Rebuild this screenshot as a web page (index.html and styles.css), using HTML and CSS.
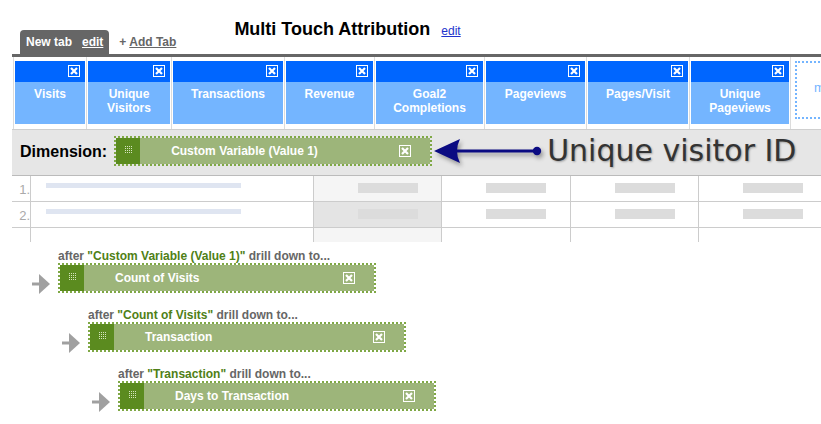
FILE: index.html
```html
<!DOCTYPE html>
<html>
<head>
<meta charset="utf-8">
<link rel="stylesheet" href="styles.css">
</head>
<body>
<div class="header">
  <div class="tab"><span>New tab</span><a href="#">edit</a></div>
  <div class="addtab">+ <a href="#">Add Tab</a></div>
  <div class="title"><h1>Multi Touch Attribution</h1><a href="#">edit</a></div>
</div>
<div class="topbar"></div>

<div class="metrics">
  <div class="mcell w1"><div class="mbox"><div class="mhead"><svg class="x" width="12" height="12" viewBox="0 0 12 12"><rect x="0.5" y="0.5" width="11" height="11" fill="#0066ff" stroke="#fff"/><path d="M3 3L9 9M9 3L3 9" stroke="#fff" stroke-width="2.2"/></svg></div><div class="mlabel">Visits</div></div></div>
  <div class="mcell w2"><div class="mbox"><div class="mhead"><svg class="x" width="12" height="12" viewBox="0 0 12 12"><rect x="0.5" y="0.5" width="11" height="11" fill="#0066ff" stroke="#fff"/><path d="M3 3L9 9M9 3L3 9" stroke="#fff" stroke-width="2.2"/></svg></div><div class="mlabel">Unique<br>Visitors</div></div></div>
  <div class="mcell w3"><div class="mbox"><div class="mhead"><svg class="x" width="12" height="12" viewBox="0 0 12 12"><rect x="0.5" y="0.5" width="11" height="11" fill="#0066ff" stroke="#fff"/><path d="M3 3L9 9M9 3L3 9" stroke="#fff" stroke-width="2.2"/></svg></div><div class="mlabel">Transactions</div></div></div>
  <div class="mcell w4"><div class="mbox"><div class="mhead"><svg class="x" width="12" height="12" viewBox="0 0 12 12"><rect x="0.5" y="0.5" width="11" height="11" fill="#0066ff" stroke="#fff"/><path d="M3 3L9 9M9 3L3 9" stroke="#fff" stroke-width="2.2"/></svg></div><div class="mlabel">Revenue</div></div></div>
  <div class="mcell w5"><div class="mbox"><div class="mhead"><svg class="x" width="12" height="12" viewBox="0 0 12 12"><rect x="0.5" y="0.5" width="11" height="11" fill="#0066ff" stroke="#fff"/><path d="M3 3L9 9M9 3L3 9" stroke="#fff" stroke-width="2.2"/></svg></div><div class="mlabel">Goal2<br>Completions</div></div></div>
  <div class="mcell w6"><div class="mbox"><div class="mhead"><svg class="x" width="12" height="12" viewBox="0 0 12 12"><rect x="0.5" y="0.5" width="11" height="11" fill="#0066ff" stroke="#fff"/><path d="M3 3L9 9M9 3L3 9" stroke="#fff" stroke-width="2.2"/></svg></div><div class="mlabel">Pageviews</div></div></div>
  <div class="mcell w7"><div class="mbox"><div class="mhead"><svg class="x" width="12" height="12" viewBox="0 0 12 12"><rect x="0.5" y="0.5" width="11" height="11" fill="#0066ff" stroke="#fff"/><path d="M3 3L9 9M9 3L3 9" stroke="#fff" stroke-width="2.2"/></svg></div><div class="mlabel">Pages/Visit</div></div></div>
  <div class="mcell w8"><div class="mbox"><div class="mhead"><svg class="x" width="12" height="12" viewBox="0 0 12 12"><rect x="0.5" y="0.5" width="11" height="11" fill="#0066ff" stroke="#fff"/><path d="M3 3L9 9M9 3L3 9" stroke="#fff" stroke-width="2.2"/></svg></div><div class="mlabel">Unique<br>Pageviews</div></div></div>
  <div class="mcell wlast"><div class="more">more</div></div>
</div>

<div class="dimbar">
  <div class="dimlabel">Dimension:</div>
  <div class="pill">
    <span class="grip"><svg width="7" height="7" viewBox="0 0 7 7"><path d="M0 0h1v1H0zM2 0h1v1H2zM4 0h1v1H4zM6 0h1v1H6zM0 2h1v1H0zM2 2h1v1H2zM4 2h1v1H4zM6 2h1v1H6zM0 4h1v1H0zM2 4h1v1H2zM4 4h1v1H4zM6 4h1v1H6zM0 6h1v1H0zM2 6h1v1H2zM4 6h1v1H4zM6 6h1v1H6z" fill="#d6e4bf"/></svg></span>
    <span class="ptext">Custom Variable (Value 1)</span>
    <svg class="pclose" width="12" height="12" viewBox="0 0 12 12"><rect x="0.5" y="0.5" width="11" height="11" fill="#9db57a" stroke="#fff"/><path d="M3 3L9 9M9 3L3 9" stroke="#fff" stroke-width="2.2"/></svg>
  </div>
  <svg class="navarrow" width="110" height="30" viewBox="0 0 110 30"><path d="M1 15L27 3Q21 15 27 27Z" fill="#0b0b82"/><path d="M20 15H102" stroke="#0b0b82" stroke-width="3"/><circle cx="104" cy="15" r="4.2" fill="#0b0b82"/></svg>
  <div class="annot">Unique visitor ID</div>
</div>

<div class="grid">
  <div class="cell num">1.</div>
  <div class="cell"><div class="lbar"></div></div>
  <div class="cell vcell shade"><div class="blk"></div></div>
  <div class="cell vcell"><div class="blk"></div></div>
  <div class="cell vcell"><div class="blk"></div></div>
  <div class="cell vcell last"><div class="blk"></div></div>

  <div class="cell num">2.</div>
  <div class="cell"><div class="lbar"></div></div>
  <div class="cell vcell shade2"><div class="blk"></div></div>
  <div class="cell vcell"><div class="blk"></div></div>
  <div class="cell vcell"><div class="blk"></div></div>
  <div class="cell vcell last"><div class="blk"></div></div>

  <div class="cell tail"></div>
  <div class="cell tail"></div>
  <div class="cell tail shade"></div>
  <div class="cell tail"></div>
  <div class="cell tail"></div>
  <div class="cell tail last"></div>
</div>

<div class="drill">
  <div class="level l1">
    <div class="dlabel">after <span class="g">"Custom Variable (Value 1)"</span> drill down to...</div>
    <div class="drow">
      <svg class="garrow" width="18" height="20" viewBox="0 0 18 20"><path d="M0 8.5h8v3H0z" fill="#a0a0a0"/><path d="M7 0L18 10L7 20Z" fill="#a0a0a0"/></svg>
      <div class="pill">
        <span class="grip"><svg width="7" height="7" viewBox="0 0 7 7"><path d="M0 0h1v1H0zM2 0h1v1H2zM4 0h1v1H4zM6 0h1v1H6zM0 2h1v1H0zM2 2h1v1H2zM4 2h1v1H4zM6 2h1v1H6zM0 4h1v1H0zM2 4h1v1H2zM4 4h1v1H4zM6 4h1v1H6zM0 6h1v1H0zM2 6h1v1H2zM4 6h1v1H4zM6 6h1v1H6z" fill="#d6e4bf"/></svg></span>
        <span class="ptext">Count of Visits</span>
        <svg class="pclose" width="12" height="12" viewBox="0 0 12 12"><rect x="0.5" y="0.5" width="11" height="11" fill="#9db57a" stroke="#fff"/><path d="M3 3L9 9M9 3L3 9" stroke="#fff" stroke-width="2.2"/></svg>
      </div>
    </div>
  </div>
  <div class="level l2">
    <div class="dlabel">after <span class="g">"Count of Visits"</span> drill down to...</div>
    <div class="drow">
      <svg class="garrow" width="18" height="20" viewBox="0 0 18 20"><path d="M0 8.5h8v3H0z" fill="#a0a0a0"/><path d="M7 0L18 10L7 20Z" fill="#a0a0a0"/></svg>
      <div class="pill">
        <span class="grip"><svg width="7" height="7" viewBox="0 0 7 7"><path d="M0 0h1v1H0zM2 0h1v1H2zM4 0h1v1H4zM6 0h1v1H6zM0 2h1v1H0zM2 2h1v1H2zM4 2h1v1H4zM6 2h1v1H6zM0 4h1v1H0zM2 4h1v1H2zM4 4h1v1H4zM6 4h1v1H6zM0 6h1v1H0zM2 6h1v1H2zM4 6h1v1H4zM6 6h1v1H6z" fill="#d6e4bf"/></svg></span>
        <span class="ptext">Transaction</span>
        <svg class="pclose" width="12" height="12" viewBox="0 0 12 12"><rect x="0.5" y="0.5" width="11" height="11" fill="#9db57a" stroke="#fff"/><path d="M3 3L9 9M9 3L3 9" stroke="#fff" stroke-width="2.2"/></svg>
      </div>
    </div>
  </div>
  <div class="level l3">
    <div class="dlabel">after <span class="g">"Transaction"</span> drill down to...</div>
    <div class="drow">
      <svg class="garrow" width="18" height="20" viewBox="0 0 18 20"><path d="M0 8.5h8v3H0z" fill="#a0a0a0"/><path d="M7 0L18 10L7 20Z" fill="#a0a0a0"/></svg>
      <div class="pill">
        <span class="grip"><svg width="7" height="7" viewBox="0 0 7 7"><path d="M0 0h1v1H0zM2 0h1v1H2zM4 0h1v1H4zM6 0h1v1H6zM0 2h1v1H0zM2 2h1v1H2zM4 2h1v1H4zM6 2h1v1H6zM0 4h1v1H0zM2 4h1v1H2zM4 4h1v1H4zM6 4h1v1H6zM0 6h1v1H0zM2 6h1v1H2zM4 6h1v1H4zM6 6h1v1H6z" fill="#d6e4bf"/></svg></span>
        <span class="ptext">Days to Transaction</span>
        <svg class="pclose" width="12" height="12" viewBox="0 0 12 12"><rect x="0.5" y="0.5" width="11" height="11" fill="#9db57a" stroke="#fff"/><path d="M3 3L9 9M9 3L3 9" stroke="#fff" stroke-width="2.2"/></svg>
      </div>
    </div>
  </div>
</div>
</body>
</html>
```

FILE: styles.css
```css
html, body {
  margin: 0;
  padding: 0;
  background: #fff;
}
body {
  width: 821px;
  height: 424px;
  overflow: hidden;
  font-family: "Liberation Sans", Arial, sans-serif;
}

/* header */
.header {
  display: flex;
  align-items: flex-end;
  height: 54px;
  padding-left: 20px;
}
.tab {
  height: 24px;
  background: #666;
  border-radius: 4px 4px 0 0;
  display: flex;
  align-items: center;
  gap: 10px;
  padding: 0 6px;
  color: #fff;
  font-size: 12px;
  font-weight: bold;
}
.tab a {
  color: #fff;
  text-decoration: underline;
}
.addtab {
  margin-left: 10px;
  line-height: 24px;
  font-size: 12px;
  font-weight: bold;
  color: #666;
}
.addtab a {
  color: #666;
  text-decoration: underline;
}
.title {
  align-self: flex-start;
  margin-top: 18px;
  margin-left: 58px;
  display: flex;
  align-items: baseline;
  gap: 11px;
}
.title h1 {
  margin: 0;
  font-size: 18px;
  line-height: 22px;
  font-weight: bold;
  color: #000;
}
.title a {
  font-size: 12px;
  color: #2233cc;
  text-decoration: underline;
}
.topbar {
  margin-left: 12px;
  height: 3px;
  background: #666;
}

/* metrics */
.metrics {
  display: flex;
  margin-left: 13px;
  height: 72px;
}
.mcell {
  box-sizing: border-box;
  border-left: 1px solid #dcdcdc;
  padding: 4px 1px 5px 1px;
  display: flex;
  flex: none;
}
.w1 { width: 73px; }
.w2 { width: 85px; }
.w3 { width: 113px; }
.w4 { width: 90px; }
.w5 { width: 110px; }
.w6 { width: 102px; }
.w7 { width: 103px; }
.w8 { width: 101px; }
.wlast { width: 60px; padding-left: 4px; }
.mbox {
  flex: 1;
  height: 63px;
  background: #74b5ff;
  display: flex;
  flex-direction: column;
}
.mhead {
  height: 21px;
  box-sizing: border-box;
  background: #0066ff;
  display: flex;
  justify-content: flex-end;
  padding: 4px 5px 0 0;
}
.x { display: block; }
.mlabel {
  color: #fff;
  font-size: 12px;
  font-weight: bold;
  line-height: 14px;
  text-align: center;
  padding-top: 5px;
}
.more {
  box-sizing: border-box;
  width: 100px;
  height: 58px;
  flex: none;
  border: 2px dotted #74b5ff;
  color: #74b5ff;
  font-size: 13px;
  line-height: 14px;
  padding: 18px 0 0 17px;
}

/* dimension bar */
.dimbar {
  margin-left: 12px;
  height: 47px;
  box-sizing: border-box;
  border-top: 1px solid #cfcfcf;
  border-bottom: 1px solid #bbb;
  background: #e6e6e6;
  display: flex;
  align-items: center;
  padding: 0 0 4px 8px;
}
.dimlabel {
  font-size: 16px;
  font-weight: bold;
  color: #000;
  margin-right: 7px;
  padding-top: 3px;
}
.pill {
  width: 318px;
  height: 30px;
  flex: none;
  box-sizing: border-box;
  border: 2px dotted #7fa845;
  background: #9db57a;
  background-clip: padding-box;
  display: flex;
  align-items: center;
}
.grip {
  width: 24px;
  align-self: stretch;
  background: #5b8b1f;
  display: flex;
  justify-content: center;
  align-items: flex-start;
  padding-top: 8px;
  box-sizing: border-box;
}
.grip svg { display: block; }
.ptext {
  color: #fff;
  font-size: 12px;
  font-weight: bold;
  padding-left: 31px;
}
.pclose {
  display: block;
  margin-left: auto;
  margin-right: 19px;
}
.navarrow {
  display: block;
  flex: none;
  margin-left: 1px;
  filter: drop-shadow(2px 3px 2px rgba(0, 0, 0, 0.35));
}
.annot {
  margin-left: 4px;
  font-family: "DejaVu Sans", Verdana, sans-serif;
  font-size: 30px;
  line-height: 34px;
  color: #333;
  text-shadow: 1px 1px 2px rgba(0, 0, 0, 0.3);
  white-space: nowrap;
}

/* table */
.grid {
  margin-left: 12px;
  display: grid;
  grid-template-columns: 19px 283px 128px 129px 128px 1fr;
}
.cell {
  box-sizing: border-box;
  height: 26px;
  border-right: 1px solid #ccc;
  border-bottom: 1px solid #ccc;
}
.cell.last { border-right: none; }
.cell.tail {
  height: 14px;
  border-bottom: none;
}
.num {
  text-align: right;
  font-size: 13px;
  line-height: 14px;
  color: #aaa;
  padding-top: 7px;
}
.lbar {
  margin: 7px 0 0 15px;
  width: 195px;
  height: 5px;
  background: #dfe5f1;
}
.vcell {
  padding: 7px 0 0 44px;
}
.blk {
  width: 60px;
  height: 10px;
  background: #dcdcdc;
}
.shade { background: #f5f5f5; }
.shade2 { background: #e4e4e4; }

/* drill down */
.drill {
  margin-top: 7px;
  display: flex;
  flex-direction: column;
  gap: 15px;
}
.l1 { margin-left: 32px; }
.l2 { margin-left: 62px; }
.l3 { margin-left: 92px; }
.dlabel {
  margin-left: 26px;
  font-size: 12px;
  font-weight: bold;
  line-height: 14px;
  color: #666;
  white-space: nowrap;
}
.dlabel .g { color: #4f8016; }
.drow {
  display: flex;
  align-items: flex-start;
  gap: 8px;
  height: 30px;
}
.garrow {
  display: block;
  flex: none;
  margin-top: 11px;
}
```
